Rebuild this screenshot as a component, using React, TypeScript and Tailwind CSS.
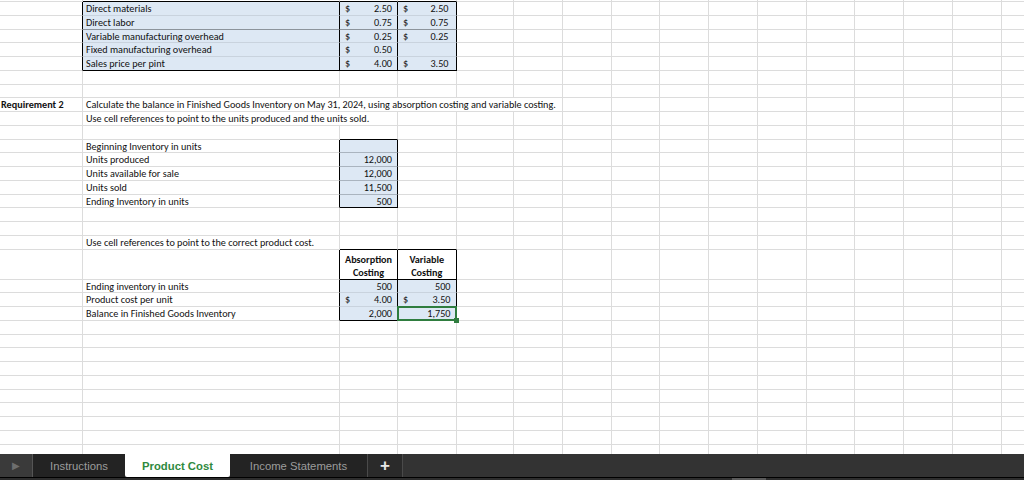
import React from 'react';

// column template mimics the sheet's column widths (A..P)
const GRID = "grid grid-cols-[83px_257px_58px_58.5px_57.5px_49px_48.5px_repeat(9,48.8px)]";
const TOTAL_COLS = 16;

const base = "relative border-r border-b border-[#dcdcdc] whitespace-nowrap flex items-end pb-[0.5px] text-[10.2px] leading-none text-[#111]";
const blue = "bg-[#dde8f4]";

type CellSpec = { cls?: string; span?: number; children?: React.ReactNode };

function Row({ h = "h-[13.75px]", cells }: { h?: string; cells: CellSpec[] }) {
    const used = cells.reduce((n, c) => n + (c.span || 1), 0);
    const fill = Array.from({ length: TOTAL_COLS - used });
    return (
        <div className={`${GRID} ${h}`}>
            {cells.map((c, i) => (
                <div
                    key={i}
                    className={`${base} ${c.cls || ''} ${c.span === 5 ? 'col-span-5' : c.span === 2 ? 'col-span-2' : ''}`}
                >
                    {c.children}
                </div>
            ))}
            {fill.map((_, i) => (
                <div key={'f' + i} className={base} />
            ))}
        </div>
    );
}

function Money({ v, pr = "pr-[5px]" }: { v: string; pr?: string }) {
    return (
        <div className={`flex w-full justify-between pl-[5px] ${pr}`}>
            <span>$</span>
            <span>{v}</span>
        </div>
    );
}

const empty = (): CellSpec[] => [];

export default function App() {
    const lbl = "pl-[3px]";
    const topRows: [string, string | null, string | null, string][] = [
        ["Direct materials", "2.50", "2.50", "border-b-[#c9d3de]"],
        ["Direct labor", "0.75", "0.75", "border-b-[#8c949c]"],
        ["Variable manufacturing overhead", "0.25", "0.25", "border-b-[#c9d3de]"],
        ["Fixed manufacturing overhead", "0.50", null, "border-b-[#c9d3de]"],
        ["Sales price per pint", "4.00", "3.50", "border-b-black"],
    ];
    const units: [string, string, string][] = [
        ["Beginning Inventory in units", "", "border-b-[#aab4bf]"],
        ["Units produced", "12,000", "border-b-[#aab4bf]"],
        ["Units available for sale", "12,000", "border-b-[#aab4bf]"],
        ["Units sold", "11,500", "border-b-[#aab4bf]"],
        ["Ending Inventory in units", "500", "border-b-black"],
    ];
    const head = "border-r-black border-b-black font-bold !items-center justify-center text-center !leading-[13px] pt-[3px]";

    return (
        <div className="w-[1024px] h-[480px] overflow-hidden bg-white flex flex-col font-['Carlito','Lato',sans-serif]">
            <div className="h-[454px] overflow-hidden">
                {/* spacer row above the first table */}
                <Row h="h-[2px]" cells={[{}, { cls: "border-b-black" }, { cls: "border-b-black" }, { cls: "border-b-black" }]} />

                {topRows.map(([label, c, d, line]) => (
                    <Row
                        key={label}
                        cells={[
                            { cls: "border-r-black" },
                            { cls: `${blue} ${lbl} border-r-black ${line}`, children: label },
                            { cls: `${blue} border-r-black ${line}`, children: c && <Money v={c} /> },
                            { cls: `${blue} border-r-black ${line}`, children: d && <Money v={d} pr="pr-[7px]" /> },
                        ]}
                    />
                ))}

                <Row cells={empty()} />
                <Row cells={empty()} />
                <Row
                    cells={[
                        { cls: "pl-[1px] font-bold", children: "Requirement 2" },
                        { cls: lbl, span: 5, children: "Calculate the balance in Finished Goods Inventory on May 31, 2024, using absorption costing and variable costing." },
                    ]}
                />
                <Row cells={[{}, { cls: lbl, span: 2, children: "Use cell references to point to the units produced and the units sold." }]} />
                <Row cells={[{}, {}, { cls: "border-b-black" }]} />

                {units.map(([label, v, line]) => (
                    <Row
                        key={label}
                        cells={[
                            {},
                            { cls: `${lbl} border-r-black`, children: label },
                            { cls: `${blue} border-r-black justify-end pr-[5px] ${line}`, children: v },
                        ]}
                    />
                ))}

                <Row cells={empty()} />
                <Row cells={empty()} />
                <Row
                    cells={[
                        {},
                        { cls: lbl, children: "Use cell references to point to the correct product cost." },
                        { cls: "border-b-black" },
                        { cls: "border-b-black" },
                    ]}
                />
                <Row
                    h="h-[30px]"
                    cells={[
                        {},
                        { cls: "border-r-black" },
                        { cls: head, children: <span>Absorption<br />Costing</span> },
                        { cls: head, children: <span>Variable<br />Costing</span> },
                    ]}
                />
                <Row
                    cells={[
                        {},
                        { cls: `${lbl} border-r-black`, children: "Ending inventory in units" },
                        { cls: `${blue} border-r-black border-b-[#c9d3de] justify-end pr-[5px]`, children: "500" },
                        { cls: `${blue} border-r-black border-b-[#c9d3de] justify-end pr-[5px]`, children: "500" },
                    ]}
                />
                <Row
                    cells={[
                        {},
                        { cls: `${lbl} border-r-black`, children: "Product cost per unit" },
                        { cls: `${blue} border-r-black border-b-[#c9d3de]`, children: <Money v="4.00" /> },
                        { cls: `${blue} border-r-black border-b-[#c9d3de]`, children: <Money v="3.50" /> },
                    ]}
                />
                <Row
                    cells={[
                        {},
                        { cls: `${lbl} border-r-black`, children: "Balance in Finished Goods Inventory" },
                        { cls: `${blue} border-r-black border-b-black justify-end pr-[5px]`, children: "2,000" },
                        {
                            cls: `${blue} border-r-black border-b-black justify-end pr-[5px] z-10`,
                            children: (
                                <>
                                    1,750
                                    {/* active cell outline + fill handle */}
                                    <div className="absolute -left-[1px] -top-[1px] -right-[1px] -bottom-[1px] border-2 border-[#2f7d3f]" />
                                    <div className="absolute -right-[3px] -bottom-[3px] w-[5px] h-[5px] bg-[#2f7d3f]" />
                                </>
                            ),
                        },
                    ]}
                />
                {Array.from({ length: 10 }).map((_, i) => (
                    <Row key={'e' + i} cells={empty()} />
                ))}
            </div>

            {/* sheet tabs */}
            <div className="h-[26px] flex flex-col bg-[#333333] font-['Liberation_Sans',Arial,sans-serif]">
                <div className="h-[23px] flex items-stretch text-[11.3px]">
                    <div className="w-[33px] bg-[#3a3a3a] border-r border-[#555] flex items-center justify-center">
                        <span className="text-[#6e6e6e] text-[10px]">▶</span>
                    </div>
                    <div className="w-[92px] bg-[#232323] text-[#9c9c9c] flex items-center justify-center pt-[1px]">Instructions</div>
                    <div className="w-[105px] bg-white text-[#2f8a3e] font-bold flex items-center justify-center rounded-b-[2px] pt-[1px]">Product Cost</div>
                    <div className="w-[138px] bg-[#232323] text-[#9c9c9c] flex items-center justify-center border-r border-[#4a4a4a] pt-[1px]">Income Statements</div>
                    <div className="w-[35px] bg-[#2a2a2a] text-[#e8e8e8] text-[17px] font-bold flex items-center justify-center border-r border-[#4a4a4a]">+</div>
                    <div className="flex-1 bg-[#333333]" />
                </div>
                <div className="h-[1px] bg-black" />
                <div className="flex-1 flex bg-[#2d2d2d]">
                    <div className="w-[732px]" />
                    <div className="w-[34px] bg-[#5a5a5a]" />
                </div>
            </div>
        </div>
    );
}
